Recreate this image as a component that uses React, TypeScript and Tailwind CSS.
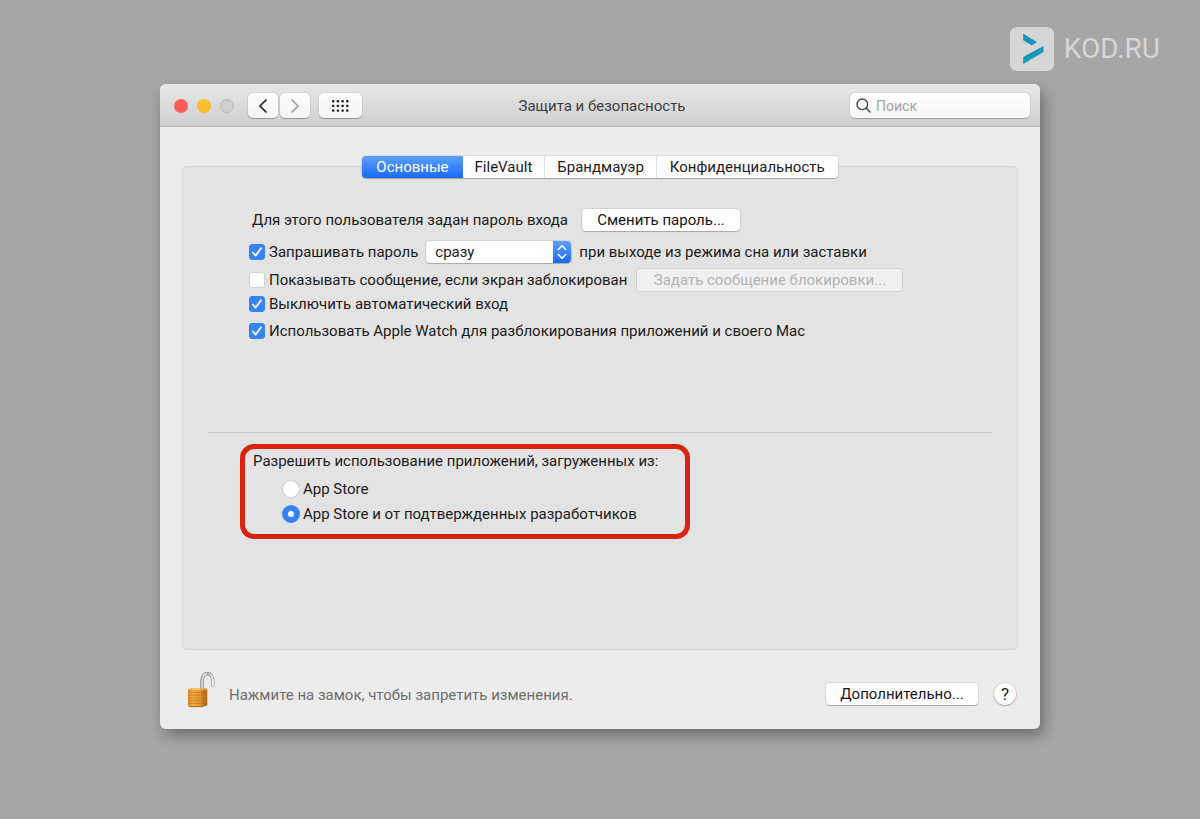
import React from "react";

const buttonStyle =
  "h-[22px] whitespace-nowrap rounded-[4px] bg-white text-center text-[#141414] shadow-[0_0_0_1px_rgba(0,0,0,0.08),0_1px_1px_rgba(0,0,0,0.22)]";
const toolStyle =
  "flex h-[25px] items-center justify-center rounded-[5px] bg-gradient-to-b from-[#fdfdfd] to-[#f5f5f5] shadow-[0_0_0_1px_rgba(0,0,0,0.06),0_1px_1px_rgba(0,0,0,0.25)]";

function CheckRow({ id, label, checked }: { id: string; label: string; checked?: boolean }) {
  return (
    <div className="flex shrink-0 items-center gap-1">
      <span className="grid size-4">
        <input
          id={id}
          type="checkbox"
          defaultChecked={checked}
          className="peer size-4 appearance-none rounded-[3px] border border-[#cfcfcf] bg-white [grid-area:1/1] checked:border-[#3584f6] checked:bg-[#3584f6]"
        />
        <svg
          viewBox="0 0 16 16"
          className="pointer-events-none hidden size-4 [grid-area:1/1] peer-checked:block"
          fill="none"
          stroke="white"
          strokeWidth="1.8"
          strokeLinecap="round"
          strokeLinejoin="round"
        >
          <path d="M3.9 8.5 6.7 11.6 12 4.2" />
        </svg>
      </span>
      <label htmlFor={id}>{label}</label>
    </div>
  );
}

function RadioRow({ id, label, checked }: { id: string; label: string; checked?: boolean }) {
  return (
    <div className="flex h-[25px] items-center gap-[3px]">
      <input
        id={id}
        type="radio"
        name="source"
        defaultChecked={checked}
        className="size-[18px] appearance-none rounded-full border border-[#cdcdcd] bg-white checked:border-6 checked:border-[#3584f6]"
      />
      <label htmlFor={id}>{label}</label>
    </div>
  );
}

function Brand() {
  return (
    <a href="#" className="flex items-center gap-[10px]">
      <svg viewBox="0 0 44 44" className="size-11">
        <rect width="44" height="44" rx="7" fill="#d6d6d6" />
        <path d="M13.2 6.500 27.200 15.200 21.800 18.200 13.200 13.300Z" fill="#1797b7" />
        <path d="M33.500 19v6L13.200 37v-7Z" fill="#1797b7" />
      </svg>
      <span className="font-['Roboto',sans-serif] text-[28px] leading-8 text-[#d6d6d6]">KOD.RU</span>
    </a>
  );
}

function Lock() {
  return (
    <svg viewBox="0 0 28 38" className="h-[38px] w-7">
      <defs>
        <linearGradient id="brass" x1="0" x2="1">
          <stop offset="0" stopColor="#d98a22" />
          <stop offset="0.25" stopColor="#f3ac45" />
          <stop offset="0.68" stopColor="#e3962f" />
          <stop offset="0.74" stopColor="#c97a1c" />
          <stop offset="1" stopColor="#b96c14" />
        </linearGradient>
        <linearGradient id="steel" x1="0" x2="1">
          <stop offset="0" stopColor="#c3cacf" />
          <stop offset="0.3" stopColor="#f5f7f8" />
          <stop offset="0.5" stopColor="#a3abb0" />
          <stop offset="1" stopColor="#f5f7f8" />
        </linearGradient>
      </defs>
      <path d="M15 18V10C15.400 5.400 17.200 2.800 20.400 2.800s5.300 2.600 5.300 6.400V15.500" fill="none" stroke="#868d92" strokeWidth="3.400" />
      <path d="M15 18V10C15.400 5.400 17.200 2.800 20.400 2.800s5.300 2.600 5.300 6.400V15" fill="none" stroke="url(#steel)" strokeWidth="2.100" />
      <path d="M1 18.200 3 17.400h15.500l1.800.8v15.600L15 35.800H3l-2-1Z" fill="url(#brass)" />
      <path d="M1 18.200 3 17.400h15.500l1.800.8-5.300.8H2.500Z" fill="#f4b859" />
      <path
        d="M1 21.200l1.500.4H15l5.300-.6M1 23.900l1.500.4H15l5.300-.6M1 26.600l1.500.4H15l5.300-.6M1 29.300l1.500.4H15l5.300-.6M1 32l1.500.4H15l5.300-.6"
        fill="none"
        stroke="#b2691a"
        strokeWidth="0.700"
        opacity="0.700"
      />
      <path d="M1.200 34.700 3 35.700h12l5.200-2" fill="none" stroke="#96520c" strokeWidth="0.800" />
    </svg>
  );
}

const tabs = [
  { name: "Основные", style: "rounded-l-[4px] bg-gradient-to-b from-[#5c9ff9] to-[#1a68f7] px-[14px] text-white" },
  { name: "FileVault", style: "border-r border-[#e2e2e2] bg-white px-3" },
  { name: "Брандмауэр", style: "border-r border-[#e2e2e2] bg-white px-3" },
  { name: "Конфиденциальность", style: "rounded-r-[4px] bg-white px-[13px]" },
];

export default function App() {
  return (
    <div className="min-h-screen bg-[#a6a6a6] pb-[90px] font-['Roboto','Noto_Sans',sans-serif] text-[15px] leading-5 text-[#1b1b1b]">
      <header className="flex justify-end px-10 pt-[27px] pb-[13px]">
        <Brand />
      </header>

      <main className="mx-auto max-w-[880px] rounded-md bg-[#ececec] shadow-[4px_7px_14px_rgba(0,0,0,0.32)]">
        <div className="grid h-[43px] grid-cols-[1fr_auto_1fr] items-center rounded-t-md border-b border-[#b9b9b9] bg-gradient-to-b from-[#e7e7e7] to-[#d0d0d0] pt-px pr-[10px] pl-[14px]">
          <div className="flex items-center">
            <div className="flex gap-[9px]">
              <button aria-label="Закрыть" className="size-[14px] rounded-full bg-[#fb5e57]" />
              <button aria-label="Свернуть" className="size-[14px] rounded-full bg-[#fbbd2e]" />
              <button aria-label="Развернуть" className="size-[14px] rounded-full border border-[#bbb] bg-[#cfcfcf]" />
            </div>
            <button aria-label="Назад" className={`${toolStyle} ml-[14px] w-[30px]`}>
              <svg viewBox="0 0 10 16" className="h-4 w-[10px]" fill="none" stroke="#222" strokeWidth="1.700">
                <path d="M8.500 1.500 2 8l6.500 6.500" />
              </svg>
            </button>
            <button aria-label="Вперед" className={`${toolStyle} ml-[2px] w-[30px]`}>
              <svg viewBox="0 0 10 16" className="h-4 w-[10px]" fill="none" stroke="#9b9b9b" strokeWidth="1.500">
                <path d="M1.500 1.500 8 8l-6.500 6.500" />
              </svg>
            </button>
            <button aria-label="Показать все" className={`${toolStyle} ml-[9px] w-[43px]`}>
              <svg viewBox="0 0 17 12" className="h-3 w-[17px]" fill="#222">
                {[0, 1, 2].map((r) =>
                  [0, 1, 2, 3].map((c) => <rect key={`${r}-${c}`} x={c * 4.7} y={r * 4.7} width="2.400" height="2.400" rx="0.700" />),
                )}
              </svg>
            </button>
          </div>
          <h1 className="text-[#404040]">Защита и безопасность</h1>
          <div className="flex h-[25px] w-[180px] items-center justify-self-end rounded-[5px] bg-gradient-to-b from-white to-[#f6f6f6] pl-[6px] shadow-[0_0_0_1px_rgba(0,0,0,0.06),0_1px_1px_rgba(0,0,0,0.2)]">
            <svg viewBox="0 0 15 15" className="size-[15px] shrink-0" fill="none" stroke="#484848" strokeWidth="1.400" strokeLinecap="round">
              <circle cx="6.300" cy="6.300" r="5.300" />
              <path d="M10.200 10.200 14 14" />
            </svg>
            <input
              type="search"
              aria-label="Поиск"
              placeholder="Поиск"
              className="ml-[5px] min-w-0 flex-1 bg-transparent text-[14px] outline-none placeholder:text-[#a3a3a3]"
            />
          </div>
        </div>

        <div className="px-[22px] pt-7">
          <div className="relative flex h-6 items-center justify-center">
            <div role="tablist" className="flex rounded-[4px] shadow-[0_0_0_1px_rgba(0,0,0,0.07),0_1px_1px_rgba(0,0,0,0.22)]">
              {tabs.map((t, i) => (
                <button key={t.name} role="tab" aria-selected={i === 0} className={`h-[22px] ${t.style}`}>
                  {t.name}
                </button>
              ))}
            </div>
          </div>

          <section className="-mt-[13px] rounded-[4px] border border-[#dadada] bg-[#e3e3e3] pt-[41px] pb-[110px]">
            <div className="pl-[66px]">
              <div className="flex h-6 items-center gap-[14px] pl-[3px]">
                <p>Для этого пользователя задан пароль входа</p>
                <button className={`${buttonStyle} w-[158px]`}>Сменить пароль...</button>
              </div>
              <div className="mt-2 flex h-6 items-center gap-2">
                <CheckRow id="ask" label="Запрашивать пароль" checked />
                <div className="grid w-[145px] shrink-0">
                  <select
                    aria-label="Когда запрашивать пароль"
                    className="h-[22px] appearance-none rounded-[4px] bg-white pl-[9px] shadow-[0_0_0_1px_rgba(0,0,0,0.08),0_1px_1px_rgba(0,0,0,0.2)] [grid-area:1/1]"
                  >
                    <option>сразу</option>
                  </select>
                  <span className="pointer-events-none flex h-[22px] w-[18px] items-center justify-center justify-self-end rounded-r-[4px] bg-gradient-to-b from-[#5c9ff9] to-[#1a68f7] [grid-area:1/1]">
                    <svg viewBox="0 0 10 16" className="h-4 w-[10px]" fill="none" stroke="white" strokeWidth="1.600" strokeLinecap="round" strokeLinejoin="round">
                      <path d="M1.300 5.500 5 1.800l3.700 3.700M1.300 10.500 5 14.200l3.700-3.700" />
                    </svg>
                  </span>
                </div>
                <span>при выходе из режима сна или заставки</span>
              </div>
              <div className="mt-1 flex h-6 items-center gap-[10px]">
                <CheckRow id="message" label="Показывать сообщение, если экран заблокирован" />
                <button
                  disabled
                  className="h-[22px] w-[265px] rounded-[4px] bg-[#f0f0f0] text-[#b3b3b3] shadow-[0_0_0_1px_rgba(0,0,0,0.08)]"
                >
                  Задать сообщение блокировки...
                </button>
              </div>
              <div className="flex h-6 items-center">
                <CheckRow id="autologin" label="Выключить автоматический вход" checked />
              </div>
              <div className="mt-[3px] flex h-6 items-center">
                <CheckRow id="watch" label="Использовать Apple Watch для разблокирования приложений и своего Mac" checked />
              </div>
            </div>

            <hr className="mx-[25px] mt-[89px] border-[#c6c6c6]" />

            <fieldset className="mt-[11px] ml-[57px] w-[450px] rounded-[14px] border-5 border-[#d9230f] pb-2 pl-2">
              <p className="h-[27px] leading-6">Разрешить использование приложений, загруженных из:</p>
              <div className="pl-[29px]">
                <RadioRow id="store" label="App Store" />
                <RadioRow id="developers" label="App Store и от подтвержденных разработчиков" checked />
              </div>
            </fieldset>
          </section>
        </div>

        <footer className="flex h-[79px] items-center justify-between pr-6 pl-[27px]">
          <div className="flex items-center gap-[14px]">
            <Lock />
            <p className="pt-[11px] text-[#6e6e6e]">Нажмите на замок, чтобы запретить изменения.</p>
          </div>
          <div className="flex items-center gap-4 pt-2">
            <button className={`${buttonStyle} w-[152px]`}>Дополнительно...</button>
            <button
              aria-label="Справка"
              className="size-[22px] rounded-full bg-white text-center text-[17px] shadow-[0_0_0_1px_rgba(0,0,0,0.1),0_1px_1px_rgba(0,0,0,0.22)]"
            >
              ?
            </button>
          </div>
        </footer>
      </main>
    </div>
  );
}
